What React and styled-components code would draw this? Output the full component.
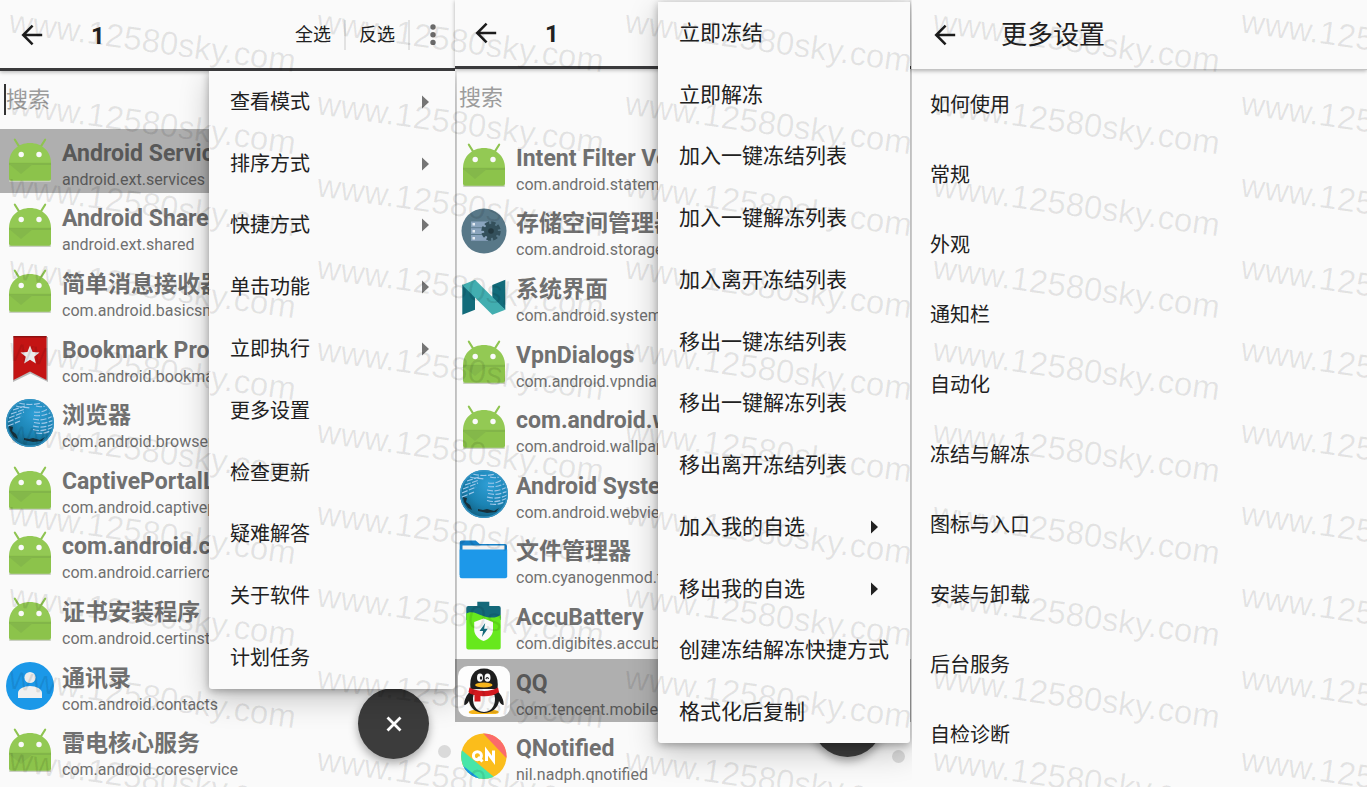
import React from 'react';
import styled, { createGlobalStyle, css } from 'styled-components';

const GlobalStyle = createGlobalStyle`
  * {
    box-sizing: border-box;
  }

  body {
    margin: 0;
    background-color: #fafafa;
    color: #212121;
    font-family: Roboto, 'Noto Sans CJK SC', sans-serif;
  }

  button, input {
    font-family: inherit;
    color: inherit;
  }
`;

// Styled Components
const Page = styled.div`
  position: relative;
  display: grid;
  grid-template-columns: 455fr 456fr 456fr;
  grid-template-rows: minmax(0, 1fr);
  height: 100vh;
  overflow: hidden;
`;

const Screen = styled.section`
  position: relative;
  min-width: 0;
  display: flex;
  flex-direction: column;
  background-color: #fafafa;
`;

const Header = styled.header`
  flex: none;
  display: flex;
  align-items: center;
  height: ${({ $height }) => $height}px;
  padding-left: ${({ $inset }) => $inset || 20}px;
  padding-right: 12px;
  padding-top: ${({ $drop }) => $drop || 0}px;
  border-bottom: ${({ $light }) => ($light ? '1px solid #c4c4c4' : '3px solid #3a3a3c')};
  box-shadow: 0 1px 4px rgba(0, 0, 0, 0.3);
`;

const plainButton = css`
  border: none;
  background: none;
  padding: 0;
  cursor: pointer;
`;

const BackButton = styled.button`
  ${plainButton}
  display: flex;
  width: 24px;
  height: 24px;
`;

const Title = styled.h1`
  flex: 1;
  margin: 0;
  padding: ${({ $pad }) => $pad || '2px 0 0 47px'};
  font-size: ${({ $size }) => $size || 24}px;
  font-weight: ${({ $weight }) => $weight || 700};
  line-height: 32px;
`;

const HeaderAction = styled.button`
  ${plainButton}
  height: 30px;
  margin-right: 13px;
  padding-right: 13px;
  border-right: 2px solid #e2e2e2;
  font-size: 18px;
  line-height: 30px;
`;

const MoreButton = styled.button`
  ${plainButton}
  display: flex;
  width: 20px;
  height: 24px;
`;

const SearchBox = styled.label`
  flex: none;
  display: block;
  height: ${({ $height }) => $height}px;
  padding: 13px 4px 0;
`;

const SearchInput = styled.input`
  display: block;
  width: 100%;
  height: 31px;
  padding: 0;
  border: none;
  border-left: ${({ $active }) => ($active ? '2px solid #333' : 'none')};
  outline: none;
  background: none;
  font-size: 22px;
  line-height: 31px;

  &::placeholder {
    color: #9c9c9c;
    opacity: 1;
  }
`;

const AppList = styled.ul`
  flex: none;
  display: grid;
  grid-template-rows: repeat(10, 1fr);
  row-gap: 2px;
  height: 654px;
  margin: 0;
  padding: 0;
  list-style: none;
`;

const AppRow = styled.li`
  display: flex;
  align-items: center;
  gap: 6px;
  min-height: 0;
  padding-left: ${({ $inset }) => $inset}px;
  overflow: hidden;
  background-color: ${({ $selected }) => ($selected ? '#afafaf' : 'transparent')};
  color: ${({ $selected }) => ($selected ? '#585858' : '#707070')};
  white-space: nowrap;
`;

const AppText = styled.div`
  display: flex;
  flex-direction: column;
  padding-top: 10px;
`;

const AppName = styled.span`
  font-size: 23px;
  font-weight: 700;
  line-height: 28px;
`;

const AppPackage = styled.span`
  font-size: 16px;
  line-height: 24px;
`;

const Icon = styled.svg`
  flex: none;
  display: block;
  width: 52px;
  height: 52px;
`;

const Menu = styled.ul`
  position: absolute;
  z-index: 2;
  top: ${({ $top }) => $top}px;
  left: ${({ $left }) => $left}px;
  right: ${({ $right }) => $right}px;
  display: grid;
  grid-template-columns: minmax(0, 1fr);
  grid-template-rows: repeat(${({ $rows }) => $rows}, 1fr);
  height: ${({ $height }) => $height}px;
  margin: 0;
  padding: 0;
  list-style: none;
  border-radius: 0 0 3px 3px;
  background-color: #fafafa;
  box-shadow: 0 10px 30px rgba(0, 0, 0, 0.22), 0 2px 8px rgba(0, 0, 0, 0.3);
  clip-path: inset(${({ $clip }) => $clip}px -2px -60px -60px);
  font-size: ${({ $size }) => $size}px;
`;

const MenuItem = styled.button`
  ${plainButton}
  display: flex;
  align-items: center;
  justify-content: space-between;
  width: 100%;
  height: 100%;
  padding: 0 ${({ $end }) => $end}px 0 21px;
  font-size: inherit;
  line-height: 30px;
  text-align: left;
  white-space: nowrap;
`;

const Chevron = styled.svg`
  display: block;
  width: 7px;
  height: 14px;
  fill: ${({ $color }) => $color};
`;

const Fab = styled.button`
  ${plainButton}
  position: absolute;
  right: ${({ $right }) => $right}px;
  bottom: ${({ $bottom }) => $bottom}px;
  display: flex;
  align-items: center;
  justify-content: center;
  width: 71px;
  height: 71px;
  border-radius: 50%;
  background-color: #3c3c3c;
  box-shadow: 0 4px 10px rgba(0, 0, 0, 0.35);
`;

const ScrollDot = styled.span`
  position: absolute;
  right: ${({ $right }) => $right}px;
  bottom: ${({ $bottom }) => $bottom}px;
  width: 13px;
  height: 13px;
  border-radius: 50%;
  background-color: #dadada;
`;

const SettingsList = styled.ul`
  margin: 0;
  padding: 0;
  list-style: none;
`;

const SettingsItem = styled.button`
  ${plainButton}
  display: block;
  width: 100%;
  height: 70px;
  padding-left: 19px;
  font-size: 20px;
  line-height: 30px;
  text-align: left;
`;

const Watermark = styled.div`
  position: absolute;
  inset: 0;
  z-index: 3;
  display: grid;
  grid-template-columns: repeat(5, 308px);
  grid-auto-rows: 82px;
  overflow: hidden;
  pointer-events: none;
`;

const WatermarkText = styled.span`
  padding-left: 8px;
  color: rgba(0, 0, 0, 0.09);
  font-family: 'Liberation Sans', Arial, sans-serif;
  font-size: 33px;
  line-height: 40px;
  white-space: nowrap;
  transform: rotate(8deg);
  transform-origin: 0 30px;
`;

// Icons
function ArrowIcon() {
  return (
    <svg width="24" height="24" viewBox="0 0 24 24" fill="none" stroke="#1c1c1c" strokeWidth="2.5">
      <path d="M22.2 12H3.5M12.6 2.6L3.2 12l9.4 9.4" />
    </svg>
  );
}

function MoreIcon() {
  return (
    <svg width="20" height="24" viewBox="0 0 20 24" fill="#6a6a6a">
      <circle cx="10" cy="4" r="2.7" />
      <circle cx="10" cy="11.7" r="2.7" />
      <circle cx="10" cy="19.4" r="2.7" />
    </svg>
  );
}

function AndroidIcon() {
  return (
    <Icon viewBox="0 0 52 52">
      <path d="M10.8 4.6l4.4 7M41.2 4.6l-4.4 7" stroke="#8fc451" strokeWidth="2" strokeLinecap="round" />
      <path d="M6 46h40" stroke="#c9cfc2" strokeWidth="2" strokeLinecap="round" />
      <path d="M5 28c0-11.500 9-20 21-20s21 8.500 21 20z" fill="#93c954" />
      <path d="M5 27.500h42v16.200a2 2 0 0 1-2 2H7a2 2 0 0 1-2-2z" fill="#8cc34b" />
      <path d="M5 28h42v2H5z" fill="#82b549" />
      <path d="M5 29h24L17 39z" fill="#84b84a" />
      <circle cx="17.200" cy="19.500" r="2.700" fill="#fafafa" />
      <circle cx="35" cy="19.500" r="2.700" fill="#fafafa" />
    </Icon>
  );
}

function BookmarkIcon() {
  return (
    <Icon viewBox="0 0 52 52">
      <path d="M9 5h35v45L26.500 41.500 9 50z" fill="#8c8c8c" opacity="0.6" />
      <path d="M9.500 4h33v44L26 39.500 9.500 48z" fill="#c41414" />
      <path d="M9.500 4h33v1.500h-33z" fill="#8e1010" />
      <path d="M26 13.500l2.600 6.400 6.900.5-5.300 4.400 1.700 6.700-5.900-3.700-5.900 3.700 1.700-6.700-5.300-4.400 6.900-.5z" fill="#ececec" />
    </Icon>
  );
}

function GlobeIcon() {
  return (
    <Icon viewBox="0 0 52 52">
      <defs>
        <radialGradient id="globe" cx="0.600" cy="0.300" r="0.800">
          <stop offset="0" stopColor="#2f9fd6" />
          <stop offset="0.550" stopColor="#1b83b3" />
          <stop offset="1" stopColor="#0f5673" />
        </radialGradient>
      </defs>
      <circle cx="26" cy="26" r="24" fill="url(#globe)" />
      <g fill="none" stroke="#9fc8ea" strokeWidth="1.200" strokeDasharray="6 1.500">
        <path d="M15 6c7 2 15 2 22 0M12 9c6 2 10 1 14 2M32 9c3 1 6 1 9 0" />
        <path d="M9 13l12-4M7 17l14-5M5 21l15-6M4 25l14-6M4 29l12-5" />
        <path d="M30 15c7 1 10-1 14-3M30 18.500c8 1 12-1 17-3" />
        <path d="M29 22c8 2 14 0 19-2.500M30 25.500c8 2 13 0 19-2" />
        <path d="M29 29c8 2 14 1 20-2M29 32.500c7 2 13 1 19-2M32 36c6 1 10 0 14-2" />
      </g>
      <path d="M5 29l4 1-1 4 4 3 2 5-4-2-4-6zM20 41l5 1 4-1 7 2 5-3-3 4-9 1-9-2z" fill="#17303b" />
      <circle cx="26" cy="26" r="23.300" fill="none" stroke="#3594c4" strokeWidth="1.400" />
    </Icon>
  );
}

function ContactsIcon() {
  return (
    <Icon viewBox="0 0 52 52">
      <circle cx="26" cy="26" r="24" fill="#1b98e8" />
      <circle cx="26" cy="17.500" r="5.600" fill="#ececec" />
      <path d="M14 38v-5c0-4 6-7 12-7s12 3 12 7v5z" fill="#f0f0f0" />
    </Icon>
  );
}

function StorageIcon() {
  return (
    <Icon viewBox="0 0 52 52">
      <circle cx="26" cy="26" r="22.500" fill="#587888" />
      <rect x="13" y="16.500" width="17" height="5.800" fill="#8aa4bd" />
      <rect x="13" y="23.200" width="17" height="5.800" fill="#8aa4bd" />
      <rect x="13" y="30" width="17" height="5.800" fill="#8aa4bd" />
      <path d="M14.500 18h2.500v2.500h-2.500zM14.500 25h2.500v2.500h-2.500zM14.500 32h2.500v2.500h-2.500z" fill="#e4ebf2" />
      <circle cx="33" cy="26" r="7" fill="#34505b" />
      <circle cx="33" cy="26" r="8" fill="none" stroke="#34505b" strokeWidth="3.500" strokeDasharray="4.200 2.083" />
      <circle cx="33" cy="26" r="2.800" fill="#23383f" />
    </Icon>
  );
}

function NougatIcon() {
  return (
    <Icon viewBox="0 0 52 52">
      <path d="M4.300 13.500L17 18.800v20L4.300 43.800zM34.300 14.100l13-5.300v30l-13-10z" fill="#126b7a" />
      <path d="M4.300 14.100L17 8.800l30.300 30-13 5z" fill="#42aeb0" />
    </Icon>
  );
}

function FolderIcon() {
  return (
    <Icon viewBox="0 0 52 52">
      <path d="M1.700 9.500a2 2 0 0 1 2-2h14l4 3.500H47a2 2 0 0 1 2 2V42H1.700z" fill="#1781c8" />
      <path d="M4.500 12.500h42V20h-42z" fill="#f1f1f1" />
      <path d="M1.700 16.500h47.500v26.700a2 2 0 0 1-2 2H3.700a2 2 0 0 1-2-2z" fill="#1d98e9" />
    </Icon>
  );
}

function BatteryIcon() {
  return (
    <Icon viewBox="0 0 52 52">
      <path d="M19.300 2.800h12V7h9.400a2 2 0 0 1 2 2v12H8.300V9a2 2 0 0 1 2-2h9z" fill="#14697a" />
      <path d="M8.300 14.500c6-3 10 0 17 2.500s13 2 17.400-1v32.500a2 2 0 0 1-2 2H10.300a2 2 0 0 1-2-2z" fill="#67e81d" />
      <path d="M25.600 19.500l9.400 3.600v7.400c0 5.500-4 9.500-9.400 11.500-5.400-2-9.400-6-9.400-11.500v-7.400z" fill="#fafafa" />
      <path d="M27.200 24l-5.700 8h3.600l-1.200 6 5.900-8.200h-3.700z" fill="#14697a" />
    </Icon>
  );
}

function PenguinIcon() {
  return (
    <Icon viewBox="0 0 52 52">
      <rect x="0" y="1" width="52" height="51" rx="10" fill="#fdfdfd" />
      <path d="M11 46.500c4-2 10-2 15 1 5-3 11-3 14.500-1 1 2-2 2.500-6 2.500H17c-4 0-7-.5-6-2.500z" fill="#f6b51b" />
      <path d="M12.500 26c-4 4-6.500 9-6.200 14 2 0 3.700-2 4.700-4 1 7 7 12 15 12s14-5 15-12c1 2 2.700 4 4.700 4 .3-5-2.200-10-6.200-14z" fill="#1e1e1e" />
      <path d="M15.500 30h21c2 8-2 17-10.500 17s-12.500-9-10.500-17z" fill="#fafafa" />
      <path d="M12.500 24C11 11 16 3.500 26 3.500S41 11 39.500 24z" fill="#1e1e1e" />
      <ellipse cx="22" cy="12.700" rx="3" ry="4.100" fill="#fafafa" />
      <ellipse cx="29.500" cy="12.700" rx="3" ry="4.100" fill="#fafafa" />
      <ellipse cx="23" cy="13" rx="1.200" ry="1.800" fill="#1e1e1e" />
      <path d="M28 14c.5-2 2-2 2.500 0" fill="none" stroke="#1e1e1e" strokeWidth="1.200" />
      <ellipse cx="25.800" cy="20" rx="8.700" ry="2.500" fill="#f6b51b" />
      <path d="M11.500 22.500c8 4.500 21 4.500 28.500 0l1 4.500c-6 4.500-13 4.500-18.500 4v5.500h-6V30c-3-.5-5-1.500-6-3z" fill="#d3191f" />
    </Icon>
  );
}

function QNotifiedIcon() {
  return (
    <Icon viewBox="0 0 52 52">
      <defs>
        <clipPath id="qn-disc">
          <circle cx="25.800" cy="26.300" r="22.700" />
        </clipPath>
      </defs>
      <g clipPath="url(#qn-disc)">
        <path d="M0 0h52v52H0z" fill="#fbbd1b" />
        <path d="M22 0h30v32z" fill="#fb6b6b" />
        <path d="M0 17l42 35H0z" fill="#48e6a8" />
        <path d="M0 32l26 20H0z" fill="#1b94e6" />
      </g>
      <circle cx="19.400" cy="25.700" r="4" fill="none" stroke="#fff" strokeWidth="3" />
      <path d="M20 27l4.500 4.500M28.500 31V21l7 9.500V20.500" fill="none" stroke="#fff" strokeWidth="3" />
    </Icon>
  );
}

const userApps = [
  { icon: AndroidIcon, name: 'Android Services Library', pkg: 'android.ext.services', selected: true },
  { icon: AndroidIcon, name: 'Android Shared Library', pkg: 'android.ext.shared' },
  { icon: AndroidIcon, name: '简单消息接收器', pkg: 'com.android.basicsmsreceiver' },
  { icon: BookmarkIcon, name: 'Bookmark Provider', pkg: 'com.android.bookmarkprovider' },
  { icon: GlobeIcon, name: '浏览器', pkg: 'com.android.browser' },
  { icon: AndroidIcon, name: 'CaptivePortalLogin', pkg: 'com.android.captiveportallogin' },
  { icon: AndroidIcon, name: 'com.android.carrierconfig', pkg: 'com.android.carrierconfig' },
  { icon: AndroidIcon, name: '证书安装程序', pkg: 'com.android.certinstaller' },
  { icon: ContactsIcon, name: '通讯录', pkg: 'com.android.contacts' },
  { icon: AndroidIcon, name: '雷电核心服务', pkg: 'com.android.coreservice' },
];

const systemApps = [
  { icon: AndroidIcon, name: 'Intent Filter Verification', pkg: 'com.android.statementservice' },
  { icon: StorageIcon, name: '存储空间管理器', pkg: 'com.android.storagemanager' },
  { icon: NougatIcon, name: '系统界面', pkg: 'com.android.systemui' },
  { icon: AndroidIcon, name: 'VpnDialogs', pkg: 'com.android.vpndialogs' },
  { icon: AndroidIcon, name: 'com.android.wallpaper', pkg: 'com.android.wallpaperbackup' },
  { icon: GlobeIcon, name: 'Android System WebView', pkg: 'com.android.webview' },
  { icon: FolderIcon, name: '文件管理器', pkg: 'com.cyanogenmod.filemanager' },
  { icon: BatteryIcon, name: 'AccuBattery', pkg: 'com.digibites.accubattery' },
  { icon: PenguinIcon, name: 'QQ', pkg: 'com.tencent.mobileqq', selected: true },
  { icon: QNotifiedIcon, name: 'QNotified', pkg: 'nil.nadph.qnotified' },
];

const optionsMenu = [
  { label: '查看模式', sub: true },
  { label: '排序方式', sub: true },
  { label: '快捷方式', sub: true },
  { label: '单击功能', sub: true },
  { label: '立即执行', sub: true },
  { label: '更多设置' },
  { label: '检查更新' },
  { label: '疑难解答' },
  { label: '关于软件' },
  { label: '计划任务' },
];

const freezeMenu = [
  { label: '立即冻结' },
  { label: '立即解冻' },
  { label: '加入一键冻结列表' },
  { label: '加入一键解冻列表' },
  { label: '加入离开冻结列表' },
  { label: '移出一键冻结列表' },
  { label: '移出一键解冻列表' },
  { label: '移出离开冻结列表' },
  { label: '加入我的自选', sub: true },
  { label: '移出我的自选', sub: true },
  { label: '创建冻结解冻快捷方式' },
  { label: '格式化后复制' },
];

const settings = [
  '如何使用', '常规', '外观', '通知栏', '自动化',
  '冻结与解冻', '图标与入口', '安装与卸载', '后台服务', '自检诊断'
];

const marks = Array.from({ length: 50 }, (_, index) => index);

function Apps({ apps, inset }) {
  return (
    <AppList>
      {apps.map(({ icon: AppIcon, name, pkg, selected }) => (
        <AppRow key={pkg} $selected={selected} $inset={inset}>
          <AppIcon />
          <AppText>
            <AppName>{name}</AppName>
            <AppPackage>{pkg}</AppPackage>
          </AppText>
        </AppRow>
      ))}
    </AppList>
  );
}

function PopupMenu({ items, end, arrow, ...place }) {
  return (
    <Menu $rows={items.length} {...place}>
      {items.map(({ label, sub }) => (
        <li key={label}>
          <MenuItem type="button" $end={end}>
            {label}
            {sub && (
              <Chevron viewBox="0 0 7 14" $color={arrow}>
                <path d="M0 0.500L7 7 0 13.500z" />
              </Chevron>
            )}
          </MenuItem>
        </li>
      ))}
    </Menu>
  );
}

function App() {
  return (
    <>
      <GlobalStyle />
      <Page>
        <Screen>
          <Header $height={71} $drop={2}>
            <BackButton type="button" aria-label="返回"><ArrowIcon /></BackButton>
            <Title>1</Title>
            <HeaderAction type="button">全选</HeaderAction>
            <HeaderAction type="button">反选</HeaderAction>
            <MoreButton type="button" aria-label="更多"><MoreIcon /></MoreButton>
          </Header>
          <SearchBox $height={58}>
            <SearchInput type="text" placeholder="搜索" aria-label="搜索" $active />
          </SearchBox>
          <Apps apps={userApps} inset={4} />
          <Fab type="button" aria-label="关闭" $right={26} $bottom={28}>
            <svg width="16" height="16" viewBox="0 0 16 16" stroke="#fff" strokeWidth="2.800">
              <path d="M1.500 1.500l13 13M14.500 1.500l-13 13" />
            </svg>
          </Fab>
          <ScrollDot $right={4} $bottom={29} />
          <PopupMenu
            items={optionsMenu}
            end={26}
            arrow="#757575"
            $size={20}
            $top={71}
            $left={209}
            $right={0}
            $height={618}
            $clip={0}
          />
        </Screen>

        <Screen>
          <Header $height={69} $inset={19}>
            <BackButton type="button" aria-label="返回"><ArrowIcon /></BackButton>
            <Title>1</Title>
          </Header>
          <SearchBox $height={65}>
            <SearchInput type="text" placeholder="搜索" aria-label="搜索" />
          </SearchBox>
          <Apps apps={systemApps} inset={3} />
          <Fab type="button" aria-label="关闭" $right={28} $bottom={30} />
          <ScrollDot $right={6} $bottom={24} />
          <PopupMenu
            items={freezeMenu}
            end={32}
            arrow="#212121"
            $size={21}
            $top={2}
            $left={203}
            $right={1}
            $height={741}
            $clip={-2}
          />
        </Screen>

        <Screen>
          <Header $height={70} $inset={22} $light>
            <BackButton type="button" aria-label="返回"><ArrowIcon /></BackButton>
            <Title $size={26} $weight={400} $pad="0 0 0 44px">更多设置</Title>
          </Header>
          <SettingsList>
            {settings.map((label) => (
              <li key={label}>
                <SettingsItem type="button">{label}</SettingsItem>
              </li>
            ))}
          </SettingsList>
        </Screen>

        <Watermark aria-hidden="true">
          {marks.map((mark) => (
            <WatermarkText key={mark}>www.12580sky.com</WatermarkText>
          ))}
        </Watermark>
      </Page>
    </>
  );
}

export default App;
